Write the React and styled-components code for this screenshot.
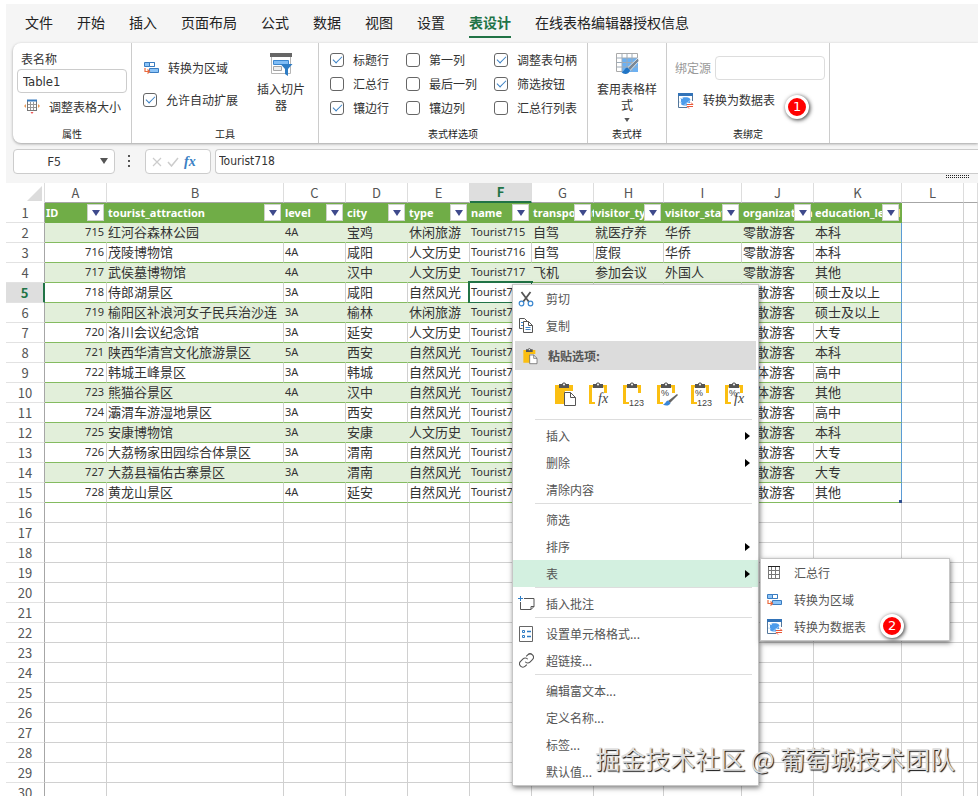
import React from "react";
import styled, { createGlobalStyle } from "styled-components";

const GlobalStyle = createGlobalStyle`
  * {
    box-sizing: border-box;
  }
  body {
    margin: 0;
    overflow: hidden;
    background: #fff;
    color: #333;
    font: 12px/16px "Noto Sans CJK SC", sans-serif;
  }
  button, input {
    margin: 0;
    padding: 0;
    border: 0;
    background: none;
    color: inherit;
    font: inherit;
  }
`;

const tabs = ["文件", "开始", "插入", "页面布局", "公式", "数据", "视图", "设置", "表设计", "在线表格编辑器授权信息"];

const styleOptions = [
  ["标题行", true],
  ["第一列", false],
  ["调整表句柄", true],
  ["汇总行", false],
  ["最后一列", false],
  ["筛选按钮", true],
  ["镶边行", true],
  ["镶边列", false],
  ["汇总行列表", false],
];

const columns = [
  { letter: "A", width: 62, title: "ID" },
  { letter: "B", width: 177, title: "tourist_attraction" },
  { letter: "C", width: 62, title: "level" },
  { letter: "D", width: 62, title: "city" },
  { letter: "E", width: 62, title: "type" },
  { letter: "F", width: 62, title: "name" },
  { letter: "G", width: 62, title: "transportation" },
  { letter: "H", width: 70, title: "visitor_type" },
  { letter: "I", width: 78, title: "visitor_status" },
  { letter: "J", width: 72, title: "organization" },
  { letter: "K", width: 88, title: "education_level" },
  { letter: "L", width: 62 },
  { letter: "" },
];

const records = [
  ["715", "红河谷森林公园", "4A", "宝鸡", "休闲旅游", "Tourist715", "自驾", "就医疗养", "华侨", "零散游客", "本科"],
  ["716", "茂陵博物馆", "4A", "咸阳", "人文历史", "Tourist716", "自驾", "度假", "华侨", "零散游客", "本科"],
  ["717", "武侯墓博物馆", "4A", "汉中", "人文历史", "Tourist717", "飞机", "参加会议", "外国人", "零散游客", "其他"],
  ["718", "侍郎湖景区", "3A", "咸阳", "自然风光", "Tourist718", "", "", "", "零散游客", "硕士及以上"],
  ["719", "榆阳区补浪河女子民兵治沙连", "3A", "榆林", "休闲旅游", "Tourist719", "", "", "", "零散游客", "硕士及以上"],
  ["720", "洛川会议纪念馆", "3A", "延安", "人文历史", "Tourist720", "", "", "", "零散游客", "大专"],
  ["721", "陕西华清宫文化旅游景区", "5A", "西安", "自然风光", "Tourist721", "", "", "", "零散游客", "本科"],
  ["722", "韩城王峰景区", "3A", "韩城", "自然风光", "Tourist722", "", "", "", "团体游客", "高中"],
  ["723", "熊猫谷景区", "4A", "汉中", "自然风光", "Tourist723", "", "", "", "团体游客", "其他"],
  ["724", "灞渭车游湿地景区", "3A", "西安", "自然风光", "Tourist724", "", "", "", "零散游客", "高中"],
  ["725", "安康博物馆", "3A", "安康", "人文历史", "Tourist725", "", "", "", "零散游客", "本科"],
  ["726", "大荔畅家田园综合体景区", "3A", "渭南", "自然风光", "Tourist726", "", "", "", "零散游客", "大专"],
  ["727", "大荔县福佑古寨景区", "3A", "渭南", "自然风光", "Tourist727", "", "", "", "零散游客", "大专"],
  ["728", "黄龙山景区", "4A", "延安", "自然风光", "Tourist728", "", "", "", "零散游客", "其他"],
];

const emptyRows = Array.from({ length: 15 }, (_, i) => i + 16);

/* ---------- icons ---------- */

const ResizeIcon = () => (
  <svg width="16" height="16" viewBox="0 0 16 16" fill="none">
    <rect x="3.5" y="1.5" width="9" height="10" fill="#fff" stroke="#777" />
    <path d="M3 1.5h10" stroke="#3a7cc0" strokeWidth="2" />
    <path d="M6.5 3v8M9.5 3v8M4 5.5h8M4 8.5h8" stroke="#999" />
    <path d="M2 5L0 7l2 2zM14 5l2 2-2 2z" fill="#eb9a55" />
    <path d="M6.5 13h3L8 15z" fill="#e55" />
  </svg>
);

const RangeIcon = () => (
  <svg width="16" height="14" viewBox="0 0 16 14" fill="none">
    <path d="M1.5 1.500h10v4h-10z" fill="#8cc4f8" stroke="#3a7cc0" />
    <path d="M6.500 1.500h5v4h-5z" fill="#fff" stroke="#3a7cc0" />
    <path d="M6.500 7.500h9v4h-9z" fill="#8cc4f8" stroke="#3a7cc0" />
    <path d="M2 7v3.500h4M4.500 8.500l2 2-2 2" stroke="#ea6b3f" strokeWidth="1.200" />
  </svg>
);

const SlicerIcon = () => (
  <svg width="24" height="24" viewBox="0 0 24 24" fill="none">
    <path d="M2.500 2.500h19v19h-19z" fill="#fff" stroke="#b5b5b5" />
    <path d="M1 1h22v4H1z" fill="#666" />
    <path d="M4.500 8.500h15v4h-15z" fill="#7fbcf5" stroke="#3a86cf" />
    <path d="M4.500 14.500h8v4h-8z" fill="#eee" stroke="#a5a5a5" />
    <path d="M11.500 12h12l-4.500 5v7l-3-2v-5z" fill="#2e7cc4" />
  </svg>
);

const TableStyleIcon = () => (
  <svg width="24" height="24" viewBox="0 0 24 24" fill="none">
    <path d="M1.500 1.500h21v18h-21z" fill="#fff" stroke="#aaa" />
    <path d="M7 6h16v14H7z" fill="#6db1f2" />
    <path d="M7 1.500v18M12 1.500v18M17 1.500v18M1.500 6h21M1.500 10.500h21M1.500 15h21" stroke="#9eabb7" />
    <path d="M23 6L12.500 16l2.500 2.500L24 9z" fill="#7b8794" stroke="#fff" strokeWidth="0.700" />
    <path d="M12.500 15.500c-3 0-2.500 4-6 4.500 2 3 8 2.500 8.500-2z" fill="#2175c5" />
  </svg>
);

const DataTableIcon = () => (
  <svg width="17" height="17" viewBox="0 0 17 17" fill="none">
    <path d="M10 15.500H1.500v-14h14V9" stroke="#54779b" />
    <path d="M1 1h15v3H1z" fill="#3273b8" />
    <path d="M4 7c0-2.200 9-2.200 9 0v5c-1 2-8 2-9 0z" fill="#4d9ceb" />
    <path d="M3 6.500h3M2 10c2 0 2 1 3 1M8 13c0-2 4-2 6-6" stroke="#bcdcf8" />
    <path d="M10 11h7v6h-7z" fill="#fff" />
    <path d="M10 12.500h6l-2-2M16 14.500h-6l2 2" stroke="#e95a3b" />
  </svg>
);

const CutIcon = () => (
  <svg width="16" height="16" viewBox="0 0 16 16" fill="none">
    <path d="M3.500 1L11 11M12.500 1L5 11" stroke="#555" strokeWidth="1.800" />
    <circle cx="3.500" cy="12.500" r="2.300" stroke="#3a86cf" strokeWidth="1.200" />
    <circle cx="12.500" cy="12.500" r="2.300" stroke="#3a86cf" strokeWidth="1.200" />
  </svg>
);

const CopyIcon = () => (
  <svg width="16" height="17" viewBox="0 0 16 17" fill="none">
    <path d="M4.500 11.500h-3v-10h5l3 3" stroke="#555" />
    <path d="M5.500 4.500h5l4 4v7h-9z" fill="#fff" stroke="#555" />
    <path d="M10.500 4.500v4h4" stroke="#555" />
    <path d="M7.500 10.500h5M7.500 12.500h5M3 5.500h2M3 8.500h2" stroke="#3a86cf" />
  </svg>
);

const CommentIcon = () => (
  <svg width="17" height="15" viewBox="0 0 17 15" fill="none">
    <path d="M6 2.500h10v8l-3 3H2.500V6" stroke="#555" />
    <path d="M16 10.500h-3v3" stroke="#555" />
    <path d="M2.500 0v5M0 2.500h5" stroke="#2e7cc4" />
  </svg>
);

const FormatIcon = () => (
  <svg width="16" height="16" viewBox="0 0 16 16" fill="none">
    <path d="M1.500.5h13v15h-13z" stroke="#666" />
    <path d="M4.500 4.500h2v2h-2zM4.500 9.500h2v2h-2z" stroke="#2e7cc4" />
    <path d="M9 5.500h4M9 10.500h4" stroke="#2e7cc4" strokeWidth="1.500" />
  </svg>
);

const LinkIcon = () => (
  <svg width="15" height="15" viewBox="0 0 24 24" fill="none" stroke="#555" strokeWidth="1.800">
    <path d="M10 14a5 5 0 0 0 7.500.5l4-4a5 5 0 0 0-7.500-7.500l-2.500 2.500" />
    <path d="M14 10a5 5 0 0 0-7.500-.5l-4 4A5 5 0 0 0 10 21l2.500-2.500" />
  </svg>
);

const GridIcon = () => (
  <svg width="14" height="13" viewBox="0 0 14 13" fill="none">
    <path d="M1.500.5v12M4.500.5v12M8.500.5v12M12.500.5v12M1 4.500h12M1 8.500h12M1 12.500h12" stroke="#777" />
    <path d="M1 .5h12" stroke="#222" />
  </svg>
);

const PasteIcon = ({ kind = "page", size = 24 }) => (
  <svg width={size} height={size} viewBox="0 0 24 24" fill="none" overflow="visible">
    {kind === "page" ? (
      <path d="M2 3h18v6h-8v13H2z" fill="#fbbf12" />
    ) : (
      <path d="M2 3h5v2.500H5V20h3v2H2zM15 3h5v8h-3V5.500h-2z" fill="#fbbf12" />
    )}
    <path d="M6 2h3c.5-2 3.500-2 4 0h3v4H6z" fill="#555" />
    <circle cx="11" cy="2.500" r="1" fill="#fff" />
    {kind === "page" && (
      <>
        <path d="M11.500 10.500h6l5 5v8h-11z" fill="#fff" stroke="#555" />
        <path d="M17.500 10.500v5h5" stroke="#555" />
      </>
    )}
    {kind.includes("percent") && (
      <text x="6" y="14" fontSize="9" fontFamily="Liberation Sans" fill="#444">%</text>
    )}
    {kind.includes("fx") && (
      <text x="11" y="21" fontSize="14" fontStyle="italic" fontFamily="Liberation Serif" fill="#444">fx</text>
    )}
    {kind.includes("123") && (
      <text x="8" y="24" fontSize="9" fontFamily="Liberation Sans" fill="#444">123</text>
    )}
    {kind.includes("brush") && (
      <>
        <path d="M22 12l-9 7 2 2 8-8z" fill="#666" />
        <path d="M13 18.500c-2 0-2 3-5 4 3 2 7 1 7.500-1.500z" fill="#3a86d8" />
      </>
    )}
  </svg>
);

const DownArrow = ({ color = "#555" }) => (
  <svg width="8" height="6" viewBox="0 0 8 6">
    <path d="M0 0h8L4 6z" fill={color} />
  </svg>
);

/* ---------- ribbon ---------- */

const RibbonCheck = ({ label, checked }) => (
  <CheckLabel>
    <CheckBox type="checkbox" defaultChecked={checked} />
    {label}
  </CheckLabel>
);

const Ribbon = () => (
  <RibbonBar>
    <Group $width={119}>
      <GroupBody $indent={4}>
        <FieldLabel htmlFor="table-name">表名称</FieldLabel>
        <TableName id="table-name" defaultValue="Table1" />
        <ToolButton $inset={7}>
          <ResizeIcon />
          调整表格大小
        </ToolButton>
      </GroupBody>
      <GroupTitle>属性</GroupTitle>
    </Group>
    <Group $width={187}>
      <SplitBody>
        <ToolColumn>
          <ToolButton>
            <RangeIcon />
            转换为区域
          </ToolButton>
          <RibbonCheck label="允许自动扩展" checked />
        </ToolColumn>
        <BigButton $width={52}>
          <SlicerIcon />
          <span>插入切片器</span>
        </BigButton>
      </SplitBody>
      <GroupTitle>工具</GroupTitle>
    </Group>
    <Group $width={269}>
      <CheckGrid>
        {styleOptions.map(([label, checked]) => (
          <RibbonCheck key={label} label={label} checked={checked} />
        ))}
      </CheckGrid>
      <GroupTitle>表式样选项</GroupTitle>
    </Group>
    <Group $width={79}>
      <SplitBody $center>
        <BigButton $width={62}>
          <TableStyleIcon />
          <span>套用表格样式</span>
          <DownArrow />
        </BigButton>
      </SplitBody>
      <GroupTitle>表式样</GroupTitle>
    </Group>
    <Group $width={163}>
      <GroupBody $indent={8} $top={13}>
        <BindField>
          绑定源
          <BindInput disabled />
        </BindField>
        <BindRow>
          <ToolButton $inset={2}>
            <DataTableIcon />
            转换为数据表
          </ToolButton>
          <Badge>1</Badge>
        </BindRow>
      </GroupBody>
      <GroupTitle>表绑定</GroupTitle>
    </Group>
  </RibbonBar>
);

const FormulaBar = () => (
  <FormulaRow>
    <NameBox>
      <input aria-label="名称框" defaultValue="F5" />
      <button aria-label="选择名称">
        <DownArrow />
      </button>
    </NameBox>
    <Dots>
      <i />
      <i />
      <i />
    </Dots>
    <FxBox>
      <button aria-label="取消">
        <svg width="10" height="10" viewBox="0 0 10 10">
          <path d="M1 1l8 8M9 1L1 9" stroke="#ccc" strokeWidth="1.200" />
        </svg>
      </button>
      <button aria-label="输入">
        <svg width="12" height="10" viewBox="0 0 12 10" fill="none">
          <path d="M1 5l3.500 4L11 1" stroke="#ccc" strokeWidth="1.500" />
        </svg>
      </button>
      <FxButton>fx</FxButton>
    </FxBox>
    <FormulaColumn>
      <FormulaInput aria-label="编辑栏" defaultValue="Tourist718" />
      <Grip width="24" height="4" viewBox="0 0 24 4">
        <path d="M0 .5h24M0 2.500h24" stroke="#222" strokeDasharray="1 1" />
      </Grip>
    </FormulaColumn>
  </FormulaRow>
);

/* ---------- sheet ---------- */

const latinColumns = [0, 2, 5];

const Sheet = () => (
  <Grid>
    <colgroup>
      <col width="39" />
      {columns.map((col, i) => (
        <col key={i} width={col.width} />
      ))}
    </colgroup>
    <thead>
      <tr>
        <Corner>
          <svg width="15" height="15" viewBox="0 0 15 15">
            <path d="M15 0v15H0z" fill="#dcdcdc" />
          </svg>
        </Corner>
        {columns.map((col, i) => (
          <ColumnHead key={i} $active={col.letter === "F"}>
            {col.letter}
          </ColumnHead>
        ))}
      </tr>
    </thead>
    <tbody>
      <tr>
        <RowHead>1</RowHead>
        {columns.map((col, i) =>
          col.title ? (
            <TitleCell key={i}>
              <TitleBox>
                <span>{col.title}</span>
                <FilterButton aria-label={`筛选 ${col.title}`}>
                  <DownArrow color="#3f4a8c" />
                </FilterButton>
              </TitleBox>
            </TitleCell>
          ) : (
            <Cell key={i} />
          )
        )}
      </tr>
      {records.map((record, r) => (
        <tr key={record[0]}>
          <RowHead $active={r === 3}>{r + 2}</RowHead>
          {record.map((value, c) => (
            <DataCell
              key={c}
              $banded={r % 2 === 0}
              $latin={latinColumns.includes(c)}
              $number={c === 0}
              $last={c === 10}
              $selected={r === 3 && c === 5}
            >
              {value}
              {r === records.length - 1 && c === 10 && <ResizeHandle />}
            </DataCell>
          ))}
          <Cell />
          <Cell />
        </tr>
      ))}
      {emptyRows.map((n) => (
        <tr key={n}>
          <RowHead>{n}</RowHead>
          {columns.map((col, i) => (
            <Cell key={i} />
          ))}
        </tr>
      ))}
    </tbody>
  </Grid>
);

/* ---------- menus ---------- */

const MenuItem = ({ icon, label, arrow, active, children }) => (
  <ItemButton $active={active}>
    <ItemIcon>{icon}</ItemIcon>
    {label}
    {children}
    {arrow && (
      <ItemArrow width="5" height="8" viewBox="0 0 5 8">
        <path d="M0 0l5 4-5 4z" fill="#000" />
      </ItemArrow>
    )}
  </ItemButton>
);

const ContextMenu = () => (
  <Menu>
    <MenuItem icon={<CutIcon />} label="剪切" />
    <MenuItem icon={<CopyIcon />} label="复制" />
    <PasteHeader>
      <PasteIcon size={16} />
      粘贴选项:
    </PasteHeader>
    <PasteRow>
      {["page", "fx", "123", "percent-brush", "percent-123", "percent-fx"].map((kind) => (
        <button key={kind} aria-label={kind}>
          <PasteIcon kind={kind} />
        </button>
      ))}
    </PasteRow>
    <Divider />
    <MenuItem label="插入" arrow />
    <MenuItem label="删除" arrow />
    <MenuItem label="清除内容" />
    <Divider />
    <MenuItem label="筛选" />
    <MenuItem label="排序" arrow />
    <MenuItem label="表" arrow active />
    <Divider />
    <MenuItem icon={<CommentIcon />} label="插入批注" />
    <Divider />
    <MenuItem icon={<FormatIcon />} label="设置单元格格式..." />
    <MenuItem icon={<LinkIcon />} label="超链接..." />
    <Divider />
    <MenuItem label="编辑富文本..." />
    <MenuItem label="定义名称..." />
    <MenuItem label="标签..." />
    <MenuItem label="默认值..." />
  </Menu>
);

const TableSubmenu = () => (
  <Submenu>
    <MenuItem icon={<GridIcon />} label="汇总行" />
    <MenuItem icon={<RangeIcon />} label="转换为区域" />
    <MenuItem icon={<DataTableIcon />} label="转换为数据表">
      <Badge>2</Badge>
    </MenuItem>
  </Submenu>
);

const App = () => {
  return (
    <Page>
      <GlobalStyle />
      <Chrome>
        <Tabs>
          {tabs.map((tab) => (
            <Tab key={tab} $active={tab === "表设计"}>
              {tab}
            </Tab>
          ))}
        </Tabs>
        <Ribbon />
        <FormulaBar />
      </Chrome>
      <Sheet />
      <ContextMenu />
      <TableSubmenu />
      <Watermark>掘金技术社区 @ 葡萄城技术团队</Watermark>
    </Page>
  );
};

const Page = styled.div`
  position: relative;
  height: 100vh;
  overflow: hidden;
  padding: 4px 0 0 6px;
`;

const Chrome = styled.header`
  padding-left: 7px;
  background: #f5f5f5;
`;

const Tabs = styled.nav`
  display: flex;
  gap: 24px;
  padding: 8px 12px 5px;
`;

const Tab = styled.button`
  height: 26px;
  padding-bottom: 4px;
  border-bottom: 2px solid ${({ $active }) => ($active ? "#217346" : "transparent")};
  color: ${({ $active }) => ($active ? "#217346" : "#222")};
  font-size: 14px;
  font-weight: ${({ $active }) => ($active ? 700 : 400)};
  line-height: 20px;
  white-space: nowrap;
`;

const RibbonBar = styled.section`
  display: flex;
  height: 100px;
  border-radius: 8px 0 0 8px;
  background: #fff;
  box-shadow: 0 1px 3px rgba(0, 0, 0, 0.35);
`;

const Group = styled.div`
  display: flex;
  flex: none;
  flex-direction: column;
  width: ${({ $width }) => $width}px;
  border-right: 1px solid #ccc;
`;

const GroupTitle = styled.div`
  height: 17px;
  color: #222;
  font-size: 10px;
  text-align: center;
`;

const GroupBody = styled.div`
  display: flex;
  flex: 1;
  flex-direction: column;
  align-items: flex-start;
  padding: ${({ $top = 8 }) => $top}px 4px 0 ${({ $indent }) => $indent}px;
`;

const FieldLabel = styled.label`
  height: 18px;
  padding-left: 4px;
`;

const TableName = styled.input`
  width: 110px;
  height: 24px;
  padding: 0 5px;
  border: 1px solid #ccc;
  border-radius: 4px;
  font-family: "DejaVu Sans Condensed", sans-serif;
  font-size: 13px;
`;

const ToolButton = styled.button`
  display: flex;
  align-items: center;
  gap: 9px;
  height: 28px;
  padding-left: ${({ $inset = 0 }) => $inset}px;
  white-space: nowrap;
`;

const SplitBody = styled.div`
  display: flex;
  flex: 1;
  justify-content: ${({ $center }) => ($center ? "center" : "space-between")};
  padding: ${({ $center }) => ($center ? "9px 0 0" : "9px 11px 0")};
`;

const ToolColumn = styled.div`
  display: flex;
  flex-direction: column;
  gap: 6px;
  padding-top: 2px;
`;

const BigButton = styled.button`
  display: flex;
  flex-direction: column;
  align-items: center;
  align-self: flex-start;
  width: ${({ $width }) => $width}px;
  text-align: center;
  span {
    margin-top: 5px;
  }
  span + svg {
    width: 6px;
    height: 4px;
    margin-top: 5px;
  }
`;

const CheckLabel = styled.label`
  display: flex;
  align-items: center;
  gap: 9px;
  height: 24px;
  white-space: nowrap;
`;

const CheckBox = styled.input`
  appearance: none;
  position: relative;
  flex: none;
  width: 14px;
  height: 14px;
  border: 1px solid #666;
  border-radius: 3px;
  background: #fff;
  &:checked::after {
    content: "";
    position: absolute;
    top: 2px;
    left: 2px;
    width: 8px;
    height: 4px;
    border: solid #3a80c4;
    border-width: 0 0 1px 1px;
    transform: rotate(-45deg);
  }
`;

const CheckGrid = styled.div`
  display: grid;
  flex: 1;
  grid-template-columns: 76px 88px auto;
  align-content: start;
  padding: 5px 0 0 11px;
`;

const BindField = styled.label`
  display: flex;
  align-items: center;
  gap: 4px;
  color: #999;
`;

const BindInput = styled.input`
  width: 110px;
  height: 24px;
  border: 1px solid #ddd;
  border-radius: 4px;
`;

const BindRow = styled.div`
  display: flex;
  gap: 10px;
  height: 40px;
  padding-top: 6px;
`;

const Badge = styled.span`
  display: block;
  width: 24px;
  height: 24px;
  border: 3px solid #fff;
  border-radius: 50%;
  background: #f00;
  box-shadow: 1px 1px 4px rgba(0, 0, 0, 0.8);
  color: #fff;
  font: 13px/18px "DejaVu Sans", sans-serif;
  text-align: center;
  ${BindRow} & {
    margin-top: 9px;
  }
`;

const FormulaRow = styled.div`
  display: flex;
  align-items: flex-start;
  height: 40px;
  padding-top: 6px;
`;

const NameBox = styled.div`
  display: flex;
  width: 102px;
  height: 25px;
  padding-bottom: 1px;
  border: 1px solid #ccc;
  border-radius: 4px;
  background: #fff;
  input {
    flex: 1;
    min-width: 0;
    text-align: center;
  }
  button {
    display: flex;
    align-items: center;
    justify-content: center;
    width: 20px;
  }
`;

const Dots = styled.div`
  display: flex;
  flex-direction: column;
  align-items: center;
  gap: 3px;
  width: 28px;
  margin-right: 2px;
  padding-top: 6px;
  i {
    width: 2px;
    height: 2px;
    background: #555;
  }
`;

const FxBox = styled.div`
  display: flex;
  align-items: center;
  gap: 5px;
  width: 66px;
  height: 25px;
  margin-right: 4px;
  padding-left: 6px;
  border: 1px solid #ccc;
  border-radius: 4px;
  background: #fff;
  svg {
    display: block;
  }
`;

const FxButton = styled.button`
  color: #3a80c4;
  font: italic 700 14px/16px "Liberation Serif", serif;
`;

const FormulaColumn = styled.div`
  display: flex;
  flex: 1;
  flex-direction: column;
`;

const FormulaInput = styled.input`
  width: 100%;
  height: 25px;
  padding: 0 3px 2px;
  border: 1px solid #ccc;
  border-right: 0;
  border-radius: 4px 0 0 4px;
  background: #fff;
  font-family: "DejaVu Sans Condensed", sans-serif;
`;

const Grip = styled.svg`
  align-self: flex-end;
  margin: 1px 8px 0 0;
`;

const Grid = styled.table`
  width: 100%;
  border-collapse: separate;
  border-spacing: 0;
  table-layout: fixed;
  tr {
    height: 20px;
  }
`;

const Cell = styled.td`
  height: 20px;
  padding: 0;
  border: solid #d0d0d0;
  border-width: 0 1px 1px 0;
`;

const Corner = styled.th`
  height: 20px;
  padding: 0 2px 0 0;
  border-right: 1px solid #ddd;
  line-height: 0;
  text-align: right;
`;

const ColumnHead = styled.th`
  height: 20px;
  padding: 0;
  border-right: 1px solid #ddd;
  border-bottom: ${({ $active }) => ($active ? "2px solid #217346" : "1px solid #a6a6a6")};
  background: ${({ $active }) => ($active ? "#dedede" : "#fff")};
  color: ${({ $active }) => ($active ? "#217346" : "#555")};
  font-size: 13px;
  font-weight: ${({ $active }) => ($active ? 700 : 400)};
  line-height: 18px;
`;

const RowHead = styled.th`
  height: 20px;
  padding: 0;
  border-right: ${({ $active }) => ($active ? "2px solid #217346" : "1px solid #a6a6a6")};
  border-bottom: 1px solid #e2e2e2;
  background: ${({ $active }) => ($active ? "#dedede" : "#fff")};
  color: ${({ $active }) => ($active ? "#217346" : "#555")};
  font-size: 13px;
  font-weight: ${({ $active }) => ($active ? 700 : 400)};
  line-height: 18px;
`;

const TitleCell = styled.td`
  height: 20px;
  padding: 0;
  border-bottom: 1px solid #70ad47;
  background: #70ad47;
`;

const TitleBox = styled.div`
  display: flex;
  align-items: center;
  height: 19px;
  overflow: hidden;
  padding: 0 3px 0 1px;
  color: #fff;
  font: 700 11px/18px "Noto Sans", sans-serif;
  span {
    flex: 1;
    width: 0;
    white-space: nowrap;
  }
`;

const FilterButton = styled.button`
  position: relative;
  display: flex;
  flex: none;
  align-items: center;
  justify-content: center;
  width: 17px;
  height: 17px;
  border: 1px solid #cdd2c9;
  background: #fff;
`;

const DataCell = styled(Cell)`
  position: relative;
  padding: ${({ $number }) => ($number ? "0 2px 1px 0" : "0 0 1px 1px")};
  border-right-color: ${({ $banded, $last }) => ($last ? "#5b9bd5" : $banded ? "#e2efda" : "#d0d0d0")};
  border-bottom-color: #84bb60;
  background: ${({ $banded }) => ($banded ? "#e2efda" : "#fff")};
  font-family: ${({ $latin }) => ($latin ? '"Noto Sans"' : '"Noto Sans CJK SC"')}, sans-serif;
  font-size: ${({ $latin }) => ($latin ? 11 : 13)}px;
  line-height: 16px;
  text-align: ${({ $number }) => ($number ? "right" : "left")};
  white-space: nowrap;
  ${({ $selected }) =>
    $selected &&
    `&::after {
      content: "";
      position: absolute;
      inset: -2px;
      border: 2px solid #217346;
    }`}
`;

const ResizeHandle = styled.i`
  position: absolute;
  right: -1px;
  bottom: -1px;
  width: 3px;
  height: 3px;
  background: #2f4f8f;
`;

const Menu = styled.div`
  position: absolute;
  top: 284px;
  left: 512px;
  width: 247px;
  border: 1px solid #c6c6c6;
  background: #fff;
  box-shadow: 1px 2px 5px rgba(0, 0, 0, 0.5);
  color: #555;
`;

const Submenu = styled(Menu)`
  top: 558px;
  left: 760px;
  width: 190px;
`;

const ItemButton = styled.button`
  display: flex;
  align-items: center;
  width: 100%;
  height: 27px;
  background: ${({ $active }) => ($active ? "#d3f0e0" : "transparent")};
  text-align: left;
  ${Badge} {
    margin: 0 0 2px 14px;
  }
`;

const ItemIcon = styled.span`
  display: flex;
  justify-content: center;
  width: 26px;
  margin-right: 7px;
`;

const ItemArrow = styled.svg`
  margin-left: auto;
  margin-right: 8px;
`;

const PasteHeader = styled.div`
  display: flex;
  align-items: center;
  gap: 10px;
  height: 29px;
  margin: 2px 2px 0;
  padding-left: 7px;
  background: #dcdcdc;
  font-weight: 700;
`;

const PasteRow = styled.div`
  display: flex;
  align-items: center;
  gap: 10px;
  height: 49px;
  padding: 0 0 2px 40px;
  button {
    width: 24px;
    height: 24px;
  }
`;

const Divider = styled.hr`
  height: 1px;
  margin: 0 6px 2px 22px;
  border: 0;
  background: #ddd;
`;

const Watermark = styled.div`
  position: absolute;
  right: 23px;
  bottom: 20px;
  color: #ddd;
  font-size: 25px;
  line-height: 36px;
  text-shadow: 1px 1px 1px #111;
  white-space: nowrap;
`;

export default App;
